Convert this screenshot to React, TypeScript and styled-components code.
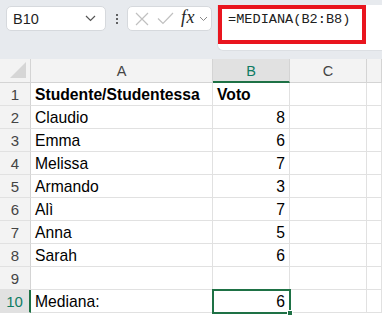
import React from "react";
import styled, { createGlobalStyle } from "styled-components";

const Global = createGlobalStyle`
  html, body { margin: 0; padding: 0; background: #ffffff; }
  body { font-family: "Liberation Sans", Arial, sans-serif; overflow: hidden; }
  * { box-sizing: border-box; }
`;

const Page = styled.div`
  width: 382px;
  height: 318px;
  display: flex;
  flex-direction: column;
  overflow: hidden;
  background: #ffffff;
`;

const Toolbar = styled.div`
  height: 59px;
  flex: none;
  background: #e7eaee;
  display: flex;
  align-items: flex-start;
  padding: 5px 0 0 6px;
`;

const NameBox = styled.div`
  margin-top: 1px;
  width: 100px;
  height: 25px;
  background: #ffffff;
  border: 1px solid #d6d9dd;
  border-radius: 5px;
  display: flex;
  align-items: center;
  justify-content: space-between;
  padding: 0 9px 0 6px;
  font-size: 14.5px;
  color: #1f1f1f;
`;

const Dots = styled.div`
  width: 21px;
  height: 26px;
  display: flex;
  flex-direction: column;
  align-items: center;
  justify-content: center;
  gap: 2px;
  margin-top: 1px;
`;

const Dot = styled.span`
  width: 2px;
  height: 2px;
  background: #333;
  border-radius: 1px;
`;

const FxBox = styled.div`
  margin-top: 1px;
  width: 85px;
  height: 25px;
  background: #ffffff;
  border: 1px solid #d6d9dd;
  border-radius: 5px;
  display: flex;
  align-items: center;
  padding: 0 0 0 5px;
`;

const IconSlot = styled.div<{ $w: number }>`
  width: ${(p) => p.$w}px;
  height: 25px;
  display: flex;
  align-items: center;
  justify-content: center;
`;

const Fx = styled.span`
  font-family: "Liberation Serif", "Times New Roman", serif;
  font-style: italic;
  font-size: 18px;
  color: #262626;
  letter-spacing: 0.5px;
  margin-top: -2px;
`;

const FormulaArea = styled.div`
  margin-left: 5px;
  flex: 1;
  height: 46px;
  background: #ffffff;
  border-radius: 0 0 0 6px;
  border-left: 1px solid #dcdfe3;
  border-bottom: 1px solid #dcdfe3;
`;

const Highlight = styled.div`
  width: 148px;
  height: 39px;
  border: 4px solid #e9151e;
  padding: 3px 0 0 6px;
  font-family: "Liberation Mono", "DejaVu Sans Mono", monospace;
  font-size: 13.6px;
  color: #202020;
`;

const Grid = styled.div`
  display: grid;
  grid-template-columns: 31px 182px 77px 77px 1fr;
  grid-auto-rows: 23px;
  grid-template-rows: 24px;
`;

const Corner = styled.div`
  background: #f3f3f3;
  border-right: 1px solid #d4d4d4;
  border-bottom: 1px solid #d4d4d4;
  display: flex;
  align-items: flex-end;
  justify-content: flex-end;
  padding: 0 4px 4px 0;
`;

const ColHead = styled.div<{ $sel?: boolean }>`
  background: ${(p) => (p.$sel ? "#e1e1e1" : "#f3f3f3")};
  border-right: 1px solid #d4d4d4;
  border-bottom: ${(p) => (p.$sel ? "2px solid #1e7145" : "1px solid #d4d4d4")};
  color: ${(p) => (p.$sel ? "#0f7b63" : "#444444")};
  font-size: 14.5px;
  display: flex;
  align-items: center;
  justify-content: center;
  padding-top: ${(p) => (p.$sel ? "1px" : "0")};
`;

const RowHead = styled.div<{ $sel?: boolean }>`
  background: ${(p) => (p.$sel ? "#e1e1e1" : "#f3f3f3")};
  border-right: ${(p) => (p.$sel ? "2px solid #1e7145" : "1px solid #d4d4d4")};
  border-bottom: 1px solid #e1e1e1;
  color: ${(p) => (p.$sel ? "#0f7b63" : "#444444")};
  font-size: 15px;
  display: flex;
  align-items: center;
  justify-content: center;
  padding-top: 1px;
`;

const Cell = styled.div<{ $num?: boolean; $bold?: boolean; $sel?: boolean }>`
  border-right: 1px solid #e1e1e1;
  border-bottom: 1px solid #e1e1e1;
  font-size: 15.7px;
  font-weight: ${(p) => (p.$bold ? 700 : 400)};
  color: #000000;
  display: flex;
  align-items: center;
  justify-content: ${(p) => (p.$num ? "flex-end" : "flex-start")};
  padding: 1px 4px 0 4px;
  white-space: nowrap;
  position: relative;
  ${(p) =>
    p.$sel
      ? `outline: 2px solid #1e7145; outline-offset: -1px; z-index: 1;`
      : ""}
`;

const Handle = styled.span`
  position: absolute;
  right: -4px;
  bottom: -4px;
  width: 6px;
  height: 6px;
  background: #1e7145;
  border: 1px solid #ffffff;
`;

const Chevron = () => (
  <svg width="11" height="7" viewBox="0 0 11 7" fill="none">
    <path d="M1 1l4.5 4.5L10 1" stroke="#555" strokeWidth="1.2" />
  </svg>
);

const SmallChevron = () => (
  <svg width="9" height="6" viewBox="0 0 9 6" fill="none">
    <path d="M1 1l3.5 3.5L8 1" stroke="#888" strokeWidth="1" />
  </svg>
);

const Cross = () => (
  <svg width="14" height="14" viewBox="0 0 14 14" fill="none">
    <path d="M1 1l12 12M13 1L1 13" stroke="#c0c0c0" strokeWidth="1.2" />
  </svg>
);

const Check = () => (
  <svg width="17" height="13" viewBox="0 0 17 13" fill="none">
    <path d="M1 6.5l5 5L16 1" stroke="#c0c0c0" strokeWidth="1.2" />
  </svg>
);

const CornerTri = () => (
  <svg width="16" height="16" viewBox="0 0 16 16">
    <path d="M16 0V16H0Z" fill="#d6d6d6" />
  </svg>
);

const rows: [string, string][] = [
  ["Studente/Studentessa", "Voto"],
  ["Claudio", "8"],
  ["Emma", "6"],
  ["Melissa", "7"],
  ["Armando", "3"],
  ["Alì", "7"],
  ["Anna", "5"],
  ["Sarah", "6"],
  ["", ""],
  ["Mediana:", "6"],
];

export default function App() {
  return (
    <Page>
      <Global />
      <Toolbar>
        <NameBox>
          <span>B10</span>
          <Chevron />
        </NameBox>
        <Dots>
          <Dot />
          <Dot />
          <Dot />
        </Dots>
        <FxBox>
          <IconSlot $w={18}>
            <Cross />
          </IconSlot>
          <IconSlot $w={28}>
            <Check />
          </IconSlot>
          <IconSlot $w={18}>
            <Fx>fx</Fx>
          </IconSlot>
          <IconSlot $w={12}>
            <SmallChevron />
          </IconSlot>
        </FxBox>
        <FormulaArea>
          <Highlight>=MEDIANA(B2:B8)</Highlight>
        </FormulaArea>
      </Toolbar>
      <Grid>
        <Corner>
          <CornerTri />
        </Corner>
        <ColHead>A</ColHead>
        <ColHead $sel>B</ColHead>
        <ColHead>C</ColHead>
        <ColHead />
        {rows.map(([a, b], i) => {
          const n = i + 1;
          const sel = n === 10;
          return (
            <React.Fragment key={n}>
              <RowHead $sel={sel}>{n}</RowHead>
              <Cell $bold={n === 1}>{a}</Cell>
              <Cell $bold={n === 1} $num={n !== 1} $sel={sel}>
                {b}
                {sel && <Handle />}
              </Cell>
              <Cell />
              <Cell />
            </React.Fragment>
          );
        })}
      </Grid>
    </Page>
  );
}
